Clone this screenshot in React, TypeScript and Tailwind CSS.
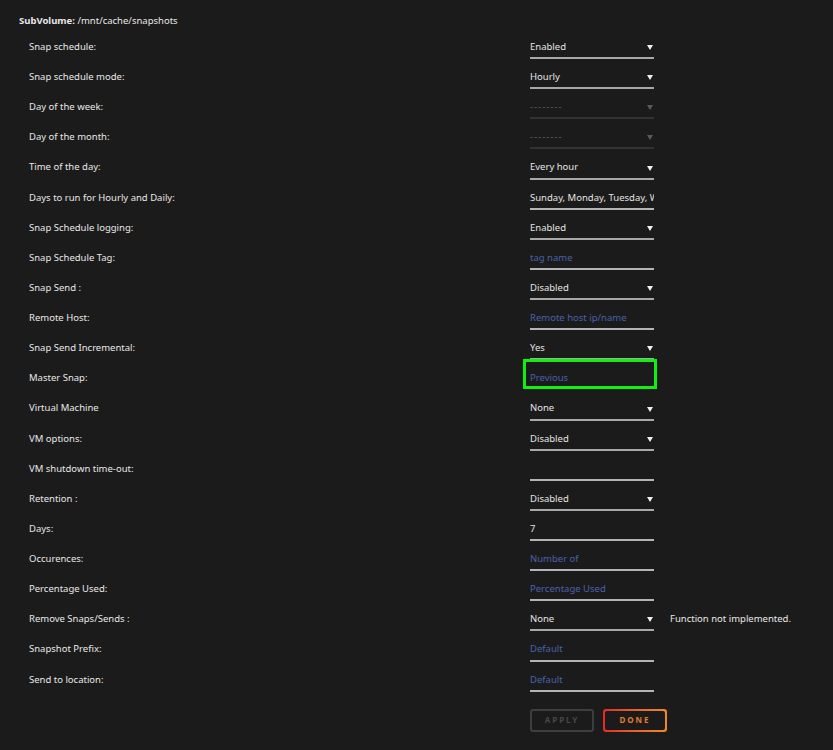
import { ReactNode } from "react";

type Field =
  | { label: string; kind: "select"; value: string; disabled?: boolean; note?: string; wrap?: string }
  | { label: string; kind: "text"; value?: string; placeholder?: string; wrap?: string };

const fields: Field[] = [
  { label: "Snap schedule:", kind: "select", value: "Enabled" },
  { label: "Snap schedule mode:", kind: "select", value: "Hourly" },
  { label: "Day of the week:", kind: "select", value: "--------", disabled: true },
  { label: "Day of the month:", kind: "select", value: "--------", disabled: true },
  { label: "Time of the day:", kind: "select", value: "Every hour" },
  { label: "Days to run for Hourly and Daily:", kind: "text", value: "Sunday, Monday, Tuesday, Wednesday" },
  { label: "Snap Schedule logging:", kind: "select", value: "Enabled" },
  { label: "Snap Schedule Tag:", kind: "text", placeholder: "tag name" },
  { label: "Snap Send :", kind: "select", value: "Disabled" },
  { label: "Remote Host:", kind: "text", placeholder: "Remote host ip/name" },
  { label: "Snap Send Incremental:", kind: "select", value: "Yes" },
  { label: "Master Snap:", kind: "text", placeholder: "Previous", wrap: "highlight" },
  { label: "Virtual Machine", kind: "select", value: "None" },
  { label: "VM options:", kind: "select", value: "Disabled" },
  { label: "VM shutdown time-out:", kind: "text" },
  { label: "Retention :", kind: "select", value: "Disabled" },
  { label: "Days:", kind: "text", value: "7" },
  { label: "Occurences:", kind: "text", placeholder: "Number of" },
  { label: "Percentage Used:", kind: "text", placeholder: "Percentage Used" },
  { label: "Remove Snaps/Sends :", kind: "select", value: "None", note: "Function not implemented." },
  { label: "Snapshot Prefix:", kind: "text", placeholder: "Default" },
  { label: "Send to location:", kind: "text", placeholder: "Default" },
];

const Arrow = ({ dim }: { dim?: boolean }) => (
  <svg width="6" height="6" viewBox="0 0 6 6" className="shrink-0">
    <path d="M0 1h6L3 6z" fill={dim ? "#5a5a5a" : "#f0f0f0"} />
  </svg>
);

const Control = ({ f }: { f: Field }) => {
  const highlight = f.wrap === "highlight";
  let inner: ReactNode;
  if (f.kind === "select") {
    inner = (
      <div
        className={`flex items-center justify-between h-[22px] border-b-2 pr-[1px] ${
          f.disabled ? "border-[#333] text-[#5e5e5e]" : "border-[#a8a8a8] text-[#e4e4e4]"
        }`}
      >
        <span className={f.disabled ? "tracking-[1px]" : ""}>{f.value}</span>
        <Arrow dim={f.disabled} />
      </div>
    );
  } else {
    inner = (
      <div
        className={`flex items-center h-[22px] border-b-2 overflow-hidden whitespace-nowrap ${
          highlight ? "border-transparent" : "border-[#b4b4b4]"
        }`}
      >
        {f.value ? (
          <span className="text-[#e4e4e4]">{f.value}</span>
        ) : (
          <span className="text-[#4762ad]">{f.placeholder}</span>
        )}
      </div>
    );
  }
  return (
    <div className="relative w-[124px] mt-[2px]">
      {inner}
      {highlight && (
        <div className="absolute -left-[7px] -right-[3px] -top-[9px] bottom-[1px] border-[3px] border-[#10f010] pointer-events-none" />
      )}
    </div>
  );
};

export default function App() {
  return (
    <div
      className="min-h-[750px] w-[833px] bg-[#1c1b1b] text-[#e8e8e8] text-[9.5px]"
      style={{ fontFamily: '"Noto Sans", "Open Sans", sans-serif' }}
    >
      <div className="pt-[14px] pl-[19px] h-[32px]">
        <span className="font-bold">SubVolume:</span> /mnt/cache/snapshots
      </div>
      <div className="flex flex-col">
        {fields.map((f) => (
          <div key={f.label} className="flex items-center h-[30.14px]">
            <div className="w-[530px] shrink-0 pl-[29px]">{f.label}</div>
            <Control f={f} />
            {f.kind === "select" && f.note && <span className="ml-[16px]">{f.note}</span>}
          </div>
        ))}
      </div>
      <div className="flex gap-[9px] pl-[530px] pt-[14px]">
        <div className="w-[64px] h-[23px] rounded-[3px] border-2 border-[#3e3e3e] flex items-center justify-center text-[8px] font-bold tracking-[2px] text-[#484848]">
          APPLY
        </div>
        <div className="w-[64px] h-[23px] rounded-[3px] p-[2px] bg-gradient-to-r from-[#e22a28] to-[#f0882a]">
          <div className="w-full h-full rounded-[2px] bg-[#1c1b1b] flex items-center justify-center text-[8px] font-bold tracking-[2px] text-[#e57c2c]">
            DONE
          </div>
        </div>
      </div>
    </div>
  );
}
